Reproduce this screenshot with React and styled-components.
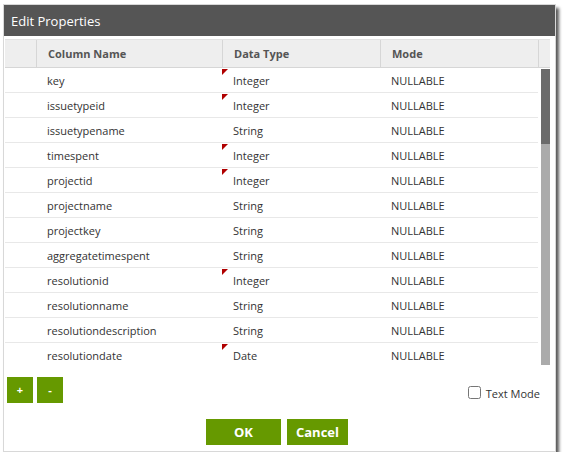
import React, { useState } from "react";
import styled, { createGlobalStyle } from "styled-components";

const GlobalStyle = createGlobalStyle`
  html, body {
    margin: 0;
    padding: 0;
    background: #ffffff;
    font-family: "Open Sans", "Noto Sans", sans-serif;
  }
`;

const Dialog = styled.div`
  width: 553px;
  height: 448px;
  margin: 4px 0 0 3px;
  display: flex;
  flex-flow: column;
  background: #ffffff;
  border: 1px solid #d8d8d8;
  box-sizing: border-box;
  box-shadow: 3px 4px 3px rgba(0, 0, 0, 0.65);
  overflow: hidden;
`;

const TitleBar = styled.div`
  height: 31px;
  flex: 0 0 auto;
  background: #555555;
  color: #ffffff;
  font-size: 13px;
  display: flex;
  align-items: center;
  padding-left: 7px;
`;

const Grid = styled.div`
  margin: 3px 5px 0 1px;
  display: flex;
  flex-flow: column;
`;

const HeaderRow = styled.div`
  display: grid;
  grid-template-columns: 31px 186px 158px 158px 1fr;
  height: 29px;
  box-sizing: border-box;
  background: #eeeeee;
  border-top: 1px solid #e2e2e2;
  border-bottom: 1px solid #d6d6d6;
`;

const HeaderCell = styled.div`
  font-size: 11px;
  font-weight: 700;
  color: #555555;
  display: flex;
  align-items: center;
  padding-left: 11px;
  border-left: ${p => (p.first ? "none" : "1px solid #d6d6d6")};
`;

const BodyWrap = styled.div`
  display: flex;
  height: 297px;
  overflow: hidden;
`;

const Rows = styled.div`
  width: 533px;
  flex: 0 0 auto;
`;

const Row = styled.div`
  display: grid;
  grid-template-columns: 31px 186px 158px 158px;
  height: 25px;
  box-sizing: border-box;
  border-bottom: 1px solid #e8e8e8;
`;

const Cell = styled.div`
  position: relative;
  font-size: 11px;
  color: #333333;
  display: flex;
  align-items: center;
  padding-left: 11px;
  white-space: nowrap;
`;

const DirtyMark = styled.span`
  position: absolute;
  left: 0;
  top: 1px;
  width: 0;
  height: 0;
  border-top: 6px solid #b00000;
  border-right: 6px solid transparent;
`;

const ScrollTrack = styled.div`
  width: 9px;
  margin-left: 3px;
  margin-top: 1px;
  height: 296px;
  background: #ababab;
`;

const ScrollThumb = styled.div`
  height: 75px;
  background: #6b6b6b;
`;

const Toolbar = styled.div`
  display: flex;
  align-items: center;
  margin-top: 12px;
  padding: 0 15px 0 3px;
  height: 26px;
`;

const SmallButton = styled.button`
  width: 26px;
  height: 26px;
  margin-right: 4px;
  border: none;
  padding: 0;
  background: #669900;
  color: #ffffff;
  font-family: "Open Sans", sans-serif;
  font-weight: 700;
  font-size: 11px;
  line-height: 26px;
  cursor: pointer;
`;

const Spacer = styled.div`
  flex: 1 1 auto;
`;

const CheckLabel = styled.label`
  display: flex;
  align-items: center;
  font-size: 11px;
  color: #333333;
  margin-top: 7px;
  input {
    width: 13px;
    height: 13px;
    margin: -3px 5px 0 0;
  }
`;

const Footer = styled.div`
  display: flex;
  justify-content: center;
  gap: 6px;
  margin-top: 16px;
  padding-right: 5px;
`;

const ActionButton = styled.button`
  height: 26px;
  width: ${p => p.w}px;
  border: none;
  padding: 0;
  background: #669900;
  color: #ffffff;
  font-family: "Open Sans", sans-serif;
  font-weight: 700;
  font-size: 13px;
  cursor: pointer;
`;

const columns = [
  ["key", "Integer"],
  ["issuetypeid", "Integer"],
  ["issuetypename", "String"],
  ["timespent", "Integer"],
  ["projectid", "Integer"],
  ["projectname", "String"],
  ["projectkey", "String"],
  ["aggregatetimespent", "String"],
  ["resolutionid", "Integer"],
  ["resolutionname", "String"],
  ["resolutiondescription", "String"],
  ["resolutiondate", "Date"]
];

export default function App() {
  const [textMode, setTextMode] = useState(false);
  return (
    <>
      <GlobalStyle />
      <Dialog>
        <TitleBar>Edit Properties</TitleBar>
        <Grid>
          <HeaderRow>
            <HeaderCell first />
            <HeaderCell>Column Name</HeaderCell>
            <HeaderCell>Data Type</HeaderCell>
            <HeaderCell>Mode</HeaderCell>
            <HeaderCell />
          </HeaderRow>
          <BodyWrap>
            <Rows>
              {columns.map(([name, type]) => (
                <Row key={name}>
                  <Cell />
                  <Cell>{name}</Cell>
                  <Cell>
                    {type !== "String" && <DirtyMark />}
                    {type}
                  </Cell>
                  <Cell>NULLABLE</Cell>
                </Row>
              ))}
            </Rows>
            <ScrollTrack>
              <ScrollThumb />
            </ScrollTrack>
          </BodyWrap>
        </Grid>
        <Toolbar>
          <SmallButton>+</SmallButton>
          <SmallButton>-</SmallButton>
          <Spacer />
          <CheckLabel>
            <input
              type="checkbox"
              checked={textMode}
              onChange={e => setTextMode(e.target.checked)}
            />
            Text Mode
          </CheckLabel>
        </Toolbar>
        <Footer>
          <ActionButton w={75}>OK</ActionButton>
          <ActionButton w={61}>Cancel</ActionButton>
        </Footer>
      </Dialog>
    </>
  );
}
